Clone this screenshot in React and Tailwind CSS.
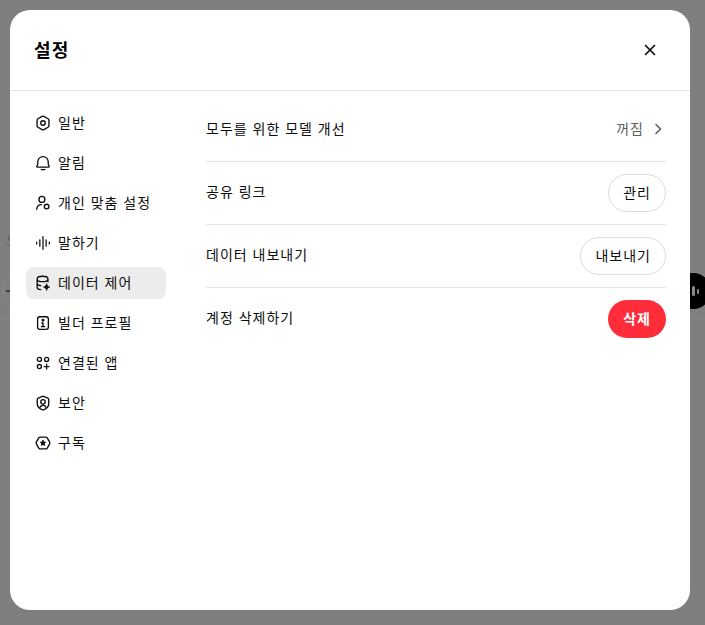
import React from "react";

const S = { width: 18, height: 18, viewBox: "0 0 20 20", fill: "none", stroke: "currentColor", strokeWidth: 1.5, strokeLinecap: "round", strokeLinejoin: "round" };
const HEX = "M9 2.600a2 2 0 0 1 2 0l4.600 2.700a2 2 0 0 1 1 1.700v6a2 2 0 0 1-1 1.700l-4.600 2.700a2 2 0 0 1-2 0l-4.600-2.700a2 2 0 0 1-1-1.700v-6a2 2 0 0 1 1-1.700z";

const Gear = () => (<svg {...S}><path d={HEX} /><circle cx="10" cy="10" r="2.500" /></svg>);
const Bell = () => (<svg {...S}><path d="M3.700 14.500c-.6 0-.9-.6-.5-1.100.7-.9 1-1.800 1-2.900V8.700a5.800 5.800 0 0 1 11.600 0v1.800c0 1.100.3 2 1 2.900.4.500.1 1.100-.5 1.100z" /><path d="M8 17.300h4" /></svg>);
const Person = () => (<svg {...S}><circle cx="8.800" cy="6" r="3.300" /><path d="M3 17c.3-3.400 2.400-5.200 5.400-5.200" /><circle cx="14" cy="14" r="2.600" /></svg>);
const Wave = () => (<svg {...S} strokeWidth="1.400"><path d="M3 9v2M6.500 6.500v7M10 3v14M13.500 6.500v7M17 9v2" /></svg>);
const Data = () => (<svg {...S}><path d="M3.500 5.500c0-1.800 2.500-3 6-3s6 1.200 6 3v3M3.500 5.500c0 1.800 2.500 3 6 3s6-1.200 6-3M3.500 5.500v9.500c0 1.200 1.400 2.200 4 2.400M3.500 10.500c0 1.200 1.400 2.200 4 2.500" /><circle cx="14" cy="14.500" r="1.600" fill="currentColor" /><path d="M14 11.300v.8M14 16.900v.8M10.900 14.500h.8M16.300 14.500h.8" /></svg>);
const Builder = () => (<svg {...S}><rect x="4" y="3" width="12" height="14" rx="2.500" /><circle cx="10" cy="7" r=".9" fill="currentColor" /><path d="M8.700 10H10v4M8.200 14h3.600" /></svg>);
const Apps = () => (<svg {...S}><circle cx="6" cy="6" r="2.300" /><circle cx="14" cy="6" r="2.300" /><circle cx="6" cy="14" r="2.300" /><path d="M14 11.300v5.400M11.300 14h5.400" /></svg>);
const Shield = () => (<svg {...S}><path d="M9.300 2.700a1.500 1.500 0 0 1 1.400 0l4.600 2c.7.300 1.100.900 1.100 1.600v4.300c0 3.300-2.500 5.800-5.800 7a1.700 1.700 0 0 1-1.200 0c-3.300-1.200-5.800-3.700-5.800-7V6.300c0-.7.400-1.300 1.100-1.600z" /><circle cx="10" cy="8.700" r="2.500" /><path d="M6.500 15c.7-1.500 1.900-2.300 3.500-2.300s2.800.8 3.500 2.300" /></svg>);
const Sub = () => (<svg {...S}><path d={HEX} transform="rotate(90 10 10)" /><path d="M10 7l.9 2 2.100.2-1.600 1.400.5 2.100-1.900-1.100-1.900 1.100.5-2.100L7 9.200 9.100 9z" fill="currentColor" strokeWidth="1" /></svg>);

const items = [
  ["일반", Gear],
  ["알림", Bell],
  ["개인 맞춤 설정", Person],
  ["말하기", Wave],
  ["데이터 제어", Data, true],
  ["빌더 프로필", Builder],
  ["연결된 앱", Apps],
  ["보안", Shield],
  ["구독", Sub],
];

const Row = ({ label, children, last }) => (
  <div className={`flex items-center justify-between ${last ? "h-[62px]" : "h-[63px] border-b border-[#e5e5e5]"}`}>
    <span className="pb-[2px]">{label}</span>
    {children}
  </div>
);

const Pill = ({ children }) => (
  <button className="flex h-[38px] items-center rounded-full border border-[#dcdcdc] bg-white px-[14px] text-[#0d0d0d]">{children}</button>
);

export default function App() {
  return (
    <div className="relative h-[625px] w-[705px] overflow-hidden bg-[#7f7f7f] p-[10px] text-sm tracking-[1px] text-[#0d0d0d] [font-family:'Liberation_Sans','Noto_Sans_CJK_KR',sans-serif]">
      <div className="absolute left-0 top-[318px] h-px w-full bg-[#868686]" />
      <div className="absolute left-[2px] top-[273px] h-[36px] w-[36px] rounded-full border border-[#878787]" />
      <div className="absolute left-[8px] top-[235px] h-[6px] w-[2px] bg-[#6a6a6a]" />
      <div className="absolute left-[6px] top-[244px] h-px w-[4px] bg-[#666666]" />
      <div className="absolute left-[6px] top-[290px] h-[2px] w-[4px] bg-[#3f3f3f]" />
      <div className="absolute left-[675px] top-[273px] flex h-[36px] w-[36px] items-center justify-center gap-[2px] rounded-full bg-black">
        <span className="h-[5px] w-[2px] rounded-full bg-[#8a8a8a]" />
        <span className="h-[10px] w-[3px] rounded-full bg-[#8a8a8a]" />
        <span className="h-[5px] w-[2px] rounded-full bg-[#8a8a8a]" />
      </div>
      <div className="relative flex h-[600px] w-[680px] flex-col rounded-[20px] bg-white">
        <header className="flex h-[81px] shrink-0 items-center justify-between border-b border-[#e5e5e5] pl-6 pr-[30px]">
          <h2 className="pt-[2px] text-lg font-bold tracking-[1.200px] text-black">설정</h2>
          <svg width="20" height="20" viewBox="0 0 20 20" fill="none" stroke="#0d0d0d" strokeWidth="1.700" strokeLinecap="round"><path d="M5.500 5.500l9 9M14.500 5.500l-9 9" /></svg>
        </header>
        <div className="flex flex-1">
          <nav className="flex w-[196px] shrink-0 flex-col gap-2 pl-4 pr-10 pt-[16px]">
            {items.map(([label, Icon, active]) => (
              <div key={label} className={`flex h-8 items-center gap-[6px] rounded-lg px-2 ${active ? "bg-[#ececec]" : ""}`}>
                <Icon />
                <span>{label}</span>
              </div>
            ))}
          </nav>
          <main className="w-[460px] pt-[8px]">
            <Row label="모두를 위한 모델 개선">
              <span className="flex items-center gap-[6px] pb-[2px] text-[#5d5d5d]">꺼짐
                <svg width="16" height="16" viewBox="0 0 16 16" fill="none" stroke="#5d5d5d" strokeWidth="1.600" strokeLinecap="round" strokeLinejoin="round"><path d="M6 3.500L10.500 8 6 12.500" /></svg>
              </span>
            </Row>
            <Row label="공유 링크"><Pill>관리</Pill></Row>
            <Row label="데이터 내보내기"><Pill>내보내기</Pill></Row>
            <Row label="계정 삭제하기" last>
              <button className="h-[38px] rounded-full bg-[#ff2d3a] px-[15px] font-bold tracking-[1px] text-white">삭제</button>
            </Row>
          </main>
        </div>
      </div>
    </div>
  );
}
